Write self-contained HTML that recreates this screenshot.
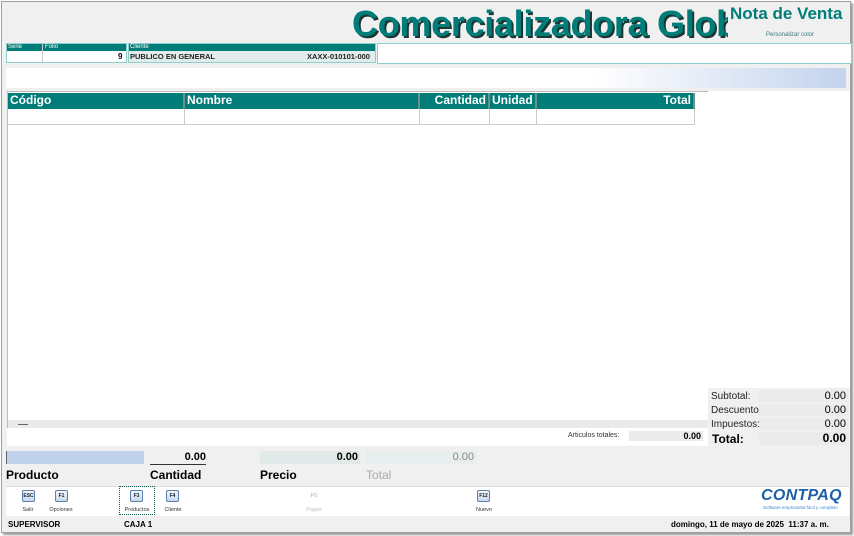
<!DOCTYPE html>
<html><head><meta charset="utf-8"><style>
*{margin:0;padding:0;box-sizing:border-box}
body{width:854px;height:536px;background:#fff;font-family:"Liberation Sans",sans-serif;position:relative;overflow:hidden}
.a{position:absolute}
.win{left:1px;top:1px;width:850px;height:532px;background:#f0f0f0;border:1px solid #a0a0a0;box-shadow:2px 2px 2px #999}
.teal{background:#007d78}
.hl{color:#fff;font-size:6px;line-height:7px}
.th{color:#fff;font-size:12px;font-weight:bold;line-height:15px;top:93px;height:16px;background:#007d78;border-right:2px solid #6f8f8d;padding:0 2px}
.cell{top:109px;height:16px;background:#fff;border-right:1px solid #ccc;border-bottom:1px solid #ccc}
.tl{font-size:10px;color:#222;left:711px}
.tv{left:759px;width:89px;height:12px;background:#ebebeb;font-size:11px;text-align:right;padding-right:2px;line-height:12px}
.key{width:13px;height:12px;border:1px solid #5a7fa8;border-radius:2px;background:linear-gradient(#f4f8fc,#c9d9ec);font-size:5px;font-weight:bold;text-align:center;line-height:10px;color:#123}
.kl{font-size:5.5px;color:#333;text-align:center;width:40px}
.lbl{font-size:12px;font-weight:bold;top:468px}
</style></head><body>
<div class="a win"></div>
<div class="a" style="left:352px;top:4px;width:376px;height:40px;overflow:hidden;white-space:nowrap;font-size:36px;font-weight:bold;color:#007d78;text-shadow:2px 2px 0 #1d3533;line-height:40px;letter-spacing:-0.3px">Comercializadora Global</div>
<div class="a" style="left:730px;top:4px;font-size:17px;font-weight:bold;color:#007d78;white-space:nowrap">Nota de Venta</div>
<div class="a" style="left:766px;top:32px;font-size:6px;color:#3a7a78">Personalizar color</div>

<div class="a" style="left:6px;top:43px;width:121px;height:20px;border:1px solid #8ccfcb;background:#fff"></div>
<div class="a teal" style="left:7px;top:44px;width:119px;height:7px"></div>
<div class="a hl" style="left:8px;top:44px">Serie</div>
<div class="a" style="left:42px;top:44px;width:1px;height:18px;background:#ccc"></div>
<div class="a hl" style="left:45px;top:44px">Folio</div>
<div class="a" style="left:118px;top:52px;font-size:8px;font-weight:bold">9</div>

<div class="a" style="left:128px;top:43px;width:248px;height:20px;border:1px solid #8ccfcb;background:#e3ecec"></div>
<div class="a teal" style="left:129px;top:44px;width:246px;height:7px"></div>
<div class="a hl" style="left:130px;top:44px">Cliente</div>
<div class="a" style="left:130px;top:52px;font-size:7.5px;font-weight:bold;color:#222">PUBLICO EN GENERAL</div>
<div class="a" style="left:307px;top:52px;font-size:7.5px;font-weight:bold;color:#222">XAXX-010101-000</div>

<div class="a" style="left:377px;top:43px;width:475px;height:21px;border:1px solid #8ccfcb;background:#fff"></div>
<div class="a" style="left:6px;top:68px;width:840px;height:20px;background:linear-gradient(90deg,#fff 0%,#fff 70%,#c3d3ee 100%)"></div>

<div class="a" style="left:7px;top:91px;width:701px;height:329px;background:#fff;border-left:1px solid #bbb;border-top:1px solid #bbb"></div>
<div class="a" style="left:708px;top:91px;width:142px;height:297px;background:#fff"></div>
<div class="a th" style="left:8px;width:177px">Código</div>
<div class="a th" style="left:185px;width:235px">Nombre</div>
<div class="a th" style="left:420px;width:70px;text-align:right">Cantidad</div>
<div class="a th" style="left:490px;width:47px">Unidad</div>
<div class="a th" style="left:537px;width:158px;text-align:right">Total</div>
<div class="a cell" style="left:8px;width:177px"></div>
<div class="a cell" style="left:185px;width:235px"></div>
<div class="a cell" style="left:420px;width:70px"></div>
<div class="a cell" style="left:490px;width:47px"></div>
<div class="a cell" style="left:537px;width:158px"></div>
<div class="a" style="left:7px;top:420px;width:701px;height:8px;background:#eaeaea;border-left:1px solid #bbb"></div>
<div class="a" style="left:18px;top:424px;width:10px;height:1px;background:#666"></div>
<div class="a" style="left:7px;top:428px;width:701px;height:18px;background:#fff"></div>
<div class="a" style="left:568px;top:432px;font-size:7px;color:#333">Articulos totales:</div>
<div class="a" style="left:629px;top:431px;width:74px;height:10px;background:#ebebeb;font-size:9px;font-weight:bold;text-align:right;padding-right:2px;line-height:10px">0.00</div>

<div class="a tl" style="top:391px">Subtotal:</div><div class="a tv" style="top:390px">0.00</div>
<div class="a tl" style="top:405px">Descuentos:</div><div class="a tv" style="top:404px">0.00</div>
<div class="a tl" style="top:419px">Impuestos:</div><div class="a tv" style="top:418px">0.00</div>
<div class="a" style="left:712px;top:432px;font-size:12px;font-weight:bold">Total:</div><div class="a tv" style="top:432px;height:13px;font-size:12px;font-weight:bold">0.00</div>

<div class="a" style="left:6px;top:451px;width:138px;height:13px;background:#c0d1ec;border-left:1px solid #666"></div>
<div class="a" style="left:150px;top:451px;width:56px;height:14px;border-bottom:1px solid #333;font-size:11px;font-weight:bold;text-align:right;line-height:13px">0.00</div>
<div class="a" style="left:260px;top:451px;width:100px;height:13px;background:#e1e9e9;font-size:11px;font-weight:bold;text-align:right;padding-right:2px;line-height:13px">0.00</div>
<div class="a" style="left:366px;top:451px;width:110px;height:13px;background:#e8eeee;font-size:11px;color:#888;text-align:right;padding-right:2px;line-height:13px">0.00</div>
<div class="a lbl" style="left:6px">Producto</div>
<div class="a lbl" style="left:150px">Cantidad</div>
<div class="a lbl" style="left:260px">Precio</div>
<div class="a lbl" style="left:366px;color:#aaa;font-weight:normal">Total</div>

<div class="a" style="left:6px;top:486px;width:843px;height:30px;background:#fff;border-top:1px solid #ddd"></div>
<div class="a key" style="left:22px;top:490px">ESC</div><div class="a kl" style="left:8px;top:507px">Salir</div>
<div class="a key" style="left:55px;top:490px">F1</div><div class="a kl" style="left:41px;top:507px">Opciones</div>
<div class="a" style="left:119px;top:486px;width:36px;height:29px;border:1.5px dotted #0a5a50"></div>
<div class="a key" style="left:130px;top:490px">F3</div><div class="a kl" style="left:117px;top:507px">Productos</div>
<div class="a key" style="left:166px;top:490px">F4</div><div class="a kl" style="left:153px;top:507px">Cliente</div>
<div class="a kl" style="left:294px;top:493px;color:#aaa">F5</div><div class="a kl" style="left:294px;top:507px;color:#bbb">Pagos</div>
<div class="a key" style="left:477px;top:490px">F12</div><div class="a kl" style="left:464px;top:507px">Nuevo</div>
<div class="a" style="left:761px;top:487px;font-size:16px;font-weight:bold;font-style:italic;color:#1e5fa8;letter-spacing:0.3px">CONTPAQ</div>
<div class="a" style="left:763px;top:505px;font-size:4.5px;color:#3a8ad0;white-space:nowrap">Software empresarial fácil y completo</div>

<div class="a" style="left:8px;top:520px;font-size:8px;font-weight:bold">SUPERVISOR</div>
<div class="a" style="left:124px;top:520px;font-size:8px;font-weight:bold">CAJA 1</div>
<div class="a" style="left:671px;top:520px;font-size:8px;font-weight:bold;white-space:nowrap">domingo, 11 de mayo de 2025&nbsp; 11:37 a. m.</div>
</body></html>
